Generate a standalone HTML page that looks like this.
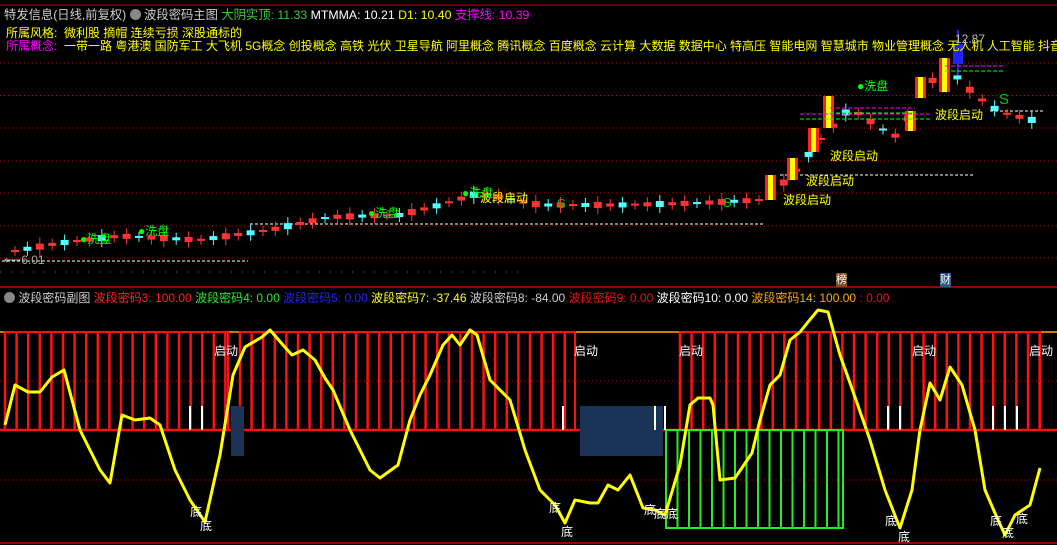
<!DOCTYPE html>
<html><head><meta charset="utf-8">
<style>
body{margin:0;background:#000;width:1057px;height:545px;overflow:hidden;font-family:"Liberation Sans","Noto Sans CJK SC",sans-serif;}
svg{position:absolute;left:0;top:0}
.t{position:absolute;font-size:12px;white-space:nowrap;line-height:14px}
</style></head><body>
<svg id="s" width="1057" height="545" xmlns="http://www.w3.org/2000/svg">
<line x1="0" y1="5" x2="1057" y2="5" stroke="#b00" stroke-width="1"/>
<line x1="0" y1="287" x2="1057" y2="287" stroke="#c00" stroke-width="1.5"/>
<line x1="0" y1="543" x2="1057" y2="543" stroke="#c00" stroke-width="1.5"/>
<g id="grid" stroke="#a00" stroke-dasharray="1,3" stroke-width="1">
<line x1="0" y1="63" x2="1057" y2="63"/><line x1="0" y1="95.5" x2="1057" y2="95.5"/>
<line x1="0" y1="128" x2="1057" y2="128"/><line x1="0" y1="161" x2="1057" y2="161"/>
<line x1="0" y1="193" x2="1057" y2="193"/><line x1="0" y1="226" x2="1057" y2="226"/>
<line x1="0" y1="258" x2="1057" y2="258"/>
<line x1="0" y1="381" x2="1057" y2="381"/><line x1="0" y1="480" x2="1057" y2="480"/>
</g>
<line x1="0" y1="272" x2="520" y2="272" stroke="#0a0" stroke-dasharray="1,10"/>
<g stroke="#fff" stroke-dasharray="3,2" stroke-width="1">
<line x1="2" y1="261" x2="248" y2="261"/><line x1="250" y1="224" x2="765" y2="224"/>
<line x1="780" y1="175" x2="975" y2="175"/><line x1="990" y1="111" x2="1045" y2="111"/>
</g>
<g id="cd"></g>
<g id="sub"></g>
</svg>
<div class="t" style="left:4px;top:8px;color:#ccc;font-size:12.3px">特发信息(日线,前复权) <span style="display:inline-block;width:11px;height:11px;border-radius:6px;background:#888;vertical-align:-1px"></span> 波段密码主图 <span style="color:#3c3">大阴实顶: 11.33</span> <span style="color:#fff">MTMMA: 10.21</span> <span style="color:#ff0">D1: 10.40</span> <span style="color:#f0f">支撑线: 10.39</span></div>
<div class="t" style="left:6px;top:26px;color:#ff0">所属风格: &nbsp;微利股 摘帽 连续亏损 深股通标的</div>
<div class="t" style="left:6px;top:39px;color:#ff0"><span style="color:#f0f">所属概念:</span> &nbsp;一带一路 粤港澳 国防军工 大飞机 5G概念 创投概念 高铁 光伏 卫星导航 阿里概念 腾讯概念 百度概念 云计算 大数据 数据中心 特高压 智能电网 智慧城市 物业管理概念 无人机 人工智能 抖音</div>
<div class="t" style="left:4px;top:291px;color:#ccc"><span style="display:inline-block;width:11px;height:11px;border-radius:6px;background:#888;vertical-align:-1px"></span> 波段密码副图 <span style="color:#f22">波段密码3: 100.00</span> <span style="color:#2e2">波段密码4: 0.00</span> <span style="color:#22f">波段密码5: 0.00</span> <span style="color:#ff2">波段密码7: -37.46</span> 波段密码8: -84.00 <span style="color:#e11">波段密码9: 0.00</span> <span style="color:#fff">波段密码10: 0.00</span> <span style="color:#fa0">波段密码14: 100.00</span> <span style="color:#e11">: 0.00</span></div>
<div class="t" style="left:4px;top:253px;color:#aaa">⟵6.01</div>
<div class="t" style="left:955px;top:32px;color:#bbb">12.87</div>
<div class="t" style="left:836px;top:273px;color:#fff;background:#7a4a20;font-size:11px">榜</div>
<div class="t" style="left:940px;top:273px;color:#fff;background:#2a5a8a;font-size:11px">财</div>
<div id="lbl"></div>
<script>
var S=document.getElementById('s'),cd=document.getElementById('cd'),sub=document.getElementById('sub'),L=document.getElementById('lbl');
function el(p,t,a){var e=document.createElementNS('http://www.w3.org/2000/svg',t);for(var k in a)e.setAttribute(k,a[k]);p.appendChild(e);return e}
function lab(x,y,t,c,fs){var d=document.createElement('div');d.className='t';d.style.left=x+'px';d.style.top=y+'px';d.style.color=c;if(fs)d.style.fontSize=fs+'px';d.textContent=t;L.appendChild(d)}
var tr=[[15,251],[60,243],[120,236],[200,240],[270,230],[330,217],[400,215],[440,205],[480,193],[540,205],[620,205],[700,203],[760,200],[790,178],[820,140],[850,108],[880,128],[900,138],[920,88],[950,70],[975,95],[1000,112],[1040,122]];
function ty(x){for(var i=1;i<tr.length;i++)if(x<=tr[i][0]){var a=tr[i-1],b=tr[i];return a[1]+(b[1]-a[1])*(x-a[0])/(b[0]-a[0])}return 122}
for(var x=15,i=0;x<1042;x+=12.4,i++){var y=ty(x),h=(i*7%5)+2,c=(i%3==1)?'#5ff':'#f33';
el(cd,'line',{x1:x,y1:y-h-3,x2:x,y2:y+h+3,stroke:c});el(cd,'rect',{x:x-4,y:y-h/2,width:8,height:Math.max(h,2),fill:c});}
[[770,175,25],[792,158,22],[813,128,24],[828,96,32],[910,111,20],[920,77,21],[944,58,34]].forEach(function(b){el(cd,'rect',{x:b[0]-5,y:b[1],width:11,height:b[2],fill:'#f22'});el(cd,'rect',{x:b[0]-2,y:b[1],width:5,height:b[2],fill:'#ff0'})});
el(cd,'rect',{x:953,y:44,width:10,height:20,fill:'#22f'});el(cd,'line',{x1:958,y1:30,x2:958,y2:75,stroke:'#22f','stroke-width':2});
[[800,114,930],[830,108,915],[945,66,1005]].forEach(function(a){el(cd,'line',{x1:a[0],y1:a[1],x2:a[2],y2:a[1],stroke:'#f0f','stroke-dasharray':'4,2'});el(cd,'line',{x1:a[0],y1:a[1]+5,x2:a[2],y2:a[1]+5,stroke:'#0f0','stroke-dasharray':'4,2'})});
lab(783,193,'波段启动','#ff0');lab(806,174,'波段启动','#ff0');lab(830,149,'波段启动','#ff0');lab(935,108,'波段启动','#ff0');lab(480,191,'波段启动','#ff0');
lab(80,232,'●洗盘','#0f0');lab(138,224,'●洗盘','#0f0');lab(368,206,'●洗盘','#0f0');lab(462,186,'●洗盘','#0f0');lab(857,79,'●洗盘','#0f0');
lab(557,197,'S','#0c0',13);lab(723,196,'S','#0c0',13);lab(999,93,'S','#0c0',15);
el(sub,'line',{x1:0,y1:332,x2:1057,y2:332,stroke:'#fa0','stroke-width':1.5});
var segs=[[5,228],[240,575],[680,1040]];
segs.forEach(function(s){el(sub,'rect',{x:s[0],y:332,width:s[1]-s[0],height:98,fill:'none',stroke:'#f11','stroke-width':2});for(var x=s[0];x<=s[1];x+=11.6)el(sub,'line',{x1:x,y1:332,x2:x,y2:430,stroke:'#f11','stroke-width':2.5})});
el(sub,'line',{x1:0,y1:430,x2:1057,y2:430,stroke:'#f11','stroke-width':2.5});
el(sub,'rect',{x:580,y:406,width:83,height:50,fill:'#1c3358'});el(sub,'rect',{x:231,y:406,width:13,height:50,fill:'#1c3358'});
el(sub,'rect',{x:666,y:430,width:177,height:98,fill:'none',stroke:'#2e2','stroke-width':2});
for(var x=666;x<=843;x+=11.5)el(sub,'line',{x1:x,y1:430,x2:x,y2:528,stroke:'#2e2','stroke-width':2});
[190,202,563,655,665,888,900,993,1005,1017].forEach(function(x){el(sub,'line',{x1:x,y1:406,x2:x,y2:430,stroke:'#fff','stroke-width':2})});
var p=[[5,425],[15,385],[28,392],[40,392],[52,377],[64,370],[80,430],[100,470],[110,483],[122,415],[135,420],[150,418],[160,425],[175,470],[190,500],[205,522],[220,455],[233,375],[245,347],[262,337],[270,330],[283,345],[292,355],[303,350],[315,360],[325,378],[333,390],[350,430],[370,470],[380,478],[398,465],[410,420],[420,395],[430,375],[443,345],[452,335],[460,345],[470,330],[477,335],[490,380],[510,400],[525,450],[540,490],[555,505],[565,523],[575,500],[590,503],[598,503],[608,485],[618,490],[630,475],[643,508],[655,510],[665,515],[680,465],[690,405],[698,398],[710,398],[713,405],[720,480],[735,478],[752,453],[760,420],[770,385],[780,375],[790,340],[800,332],[808,322],[818,310],[828,312],[840,355],[850,383],[870,440],[885,490],[900,528],[912,490],[920,430],[930,383],[940,400],[950,367],[962,385],[975,430],[985,490],[998,520],[1005,535],[1015,515],[1030,505],[1040,468]];
el(sub,'polyline',{points:p.join(' '),fill:'none',stroke:'#ff0','stroke-width':3,'stroke-linejoin':'round'});
[[214,344],[574,344],[679,344],[912,344],[1029,344]].forEach(function(a){lab(a[0],a[1],'启动','#fff')});
[[190,505],[200,519],[549,501],[561,525],[644,503],[654,507],[666,507],[885,514],[898,530],[990,514],[1016,512],[1002,526]].forEach(function(a){lab(a[0],a[1],'底','#fff')});
</script>
</body></html>
